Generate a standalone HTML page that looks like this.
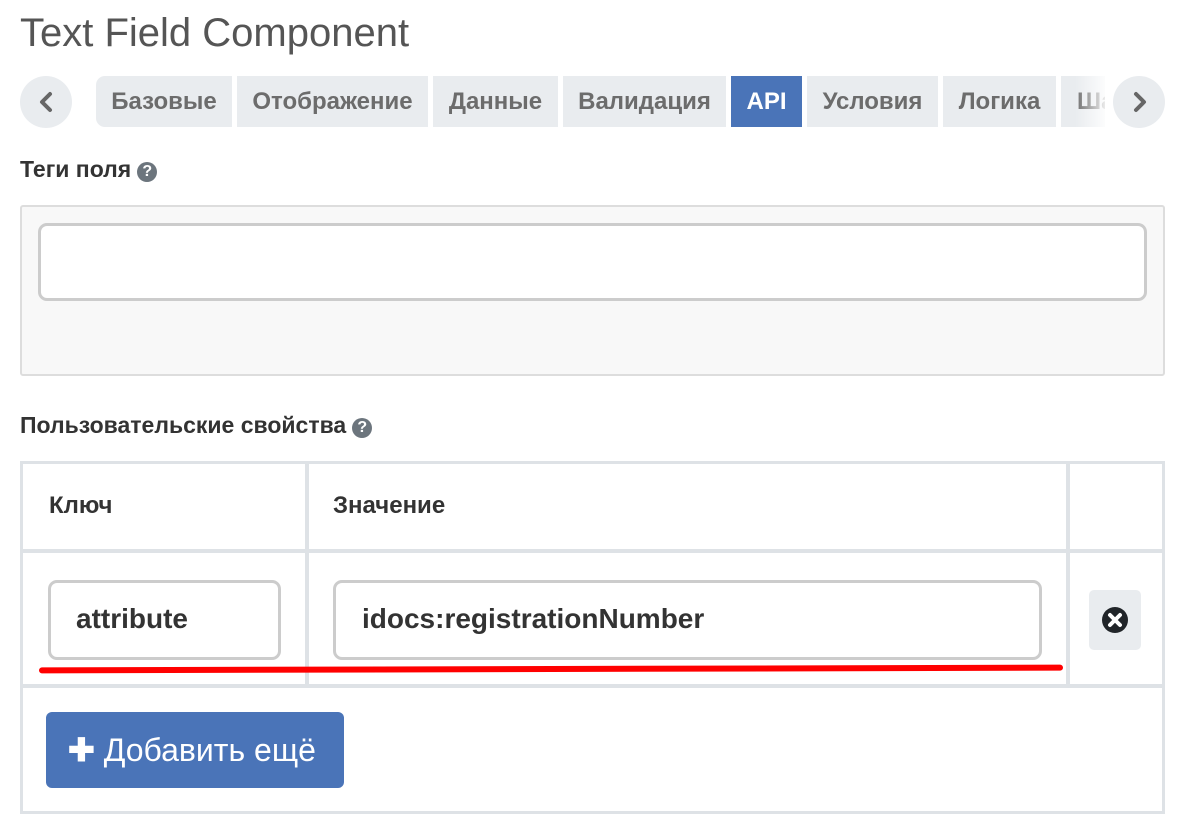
<!DOCTYPE html>
<html><head><meta charset="utf-8"><style>
*{box-sizing:border-box;margin:0;padding:0}
body{width:1195px;height:835px;background:#fff;font-family:"Liberation Sans",Arial,sans-serif;position:relative;overflow:hidden;color:#333}
.abs{position:absolute}
h1{position:absolute;left:20px;top:11px;font-size:40px;font-weight:normal;color:#555}
.circ{position:absolute;top:76px;width:52px;height:52px;border-radius:50%;background:#e9ecef}
.tab{position:absolute;top:76px;height:51px;background:#e9ecef;color:#6c6c6c;font-weight:bold;font-size:24px;line-height:51px;text-align:center;overflow:hidden;white-space:nowrap}
.lbl{position:absolute;left:20px;font-weight:bold;font-size:23px;color:#333}
.q{display:inline-block;width:20px;height:20px;border-radius:50%;background:#6c757d;color:#fff;font-size:16px;line-height:20px;text-align:center;vertical-align:1px;margin-left:6px}
.inp{position:absolute;border:3px solid #ccc;border-radius:9px;background:#fff;font-size:28px;font-weight:bold;color:#333;line-height:72px}
.hl{position:absolute;background:#dee2e6}
</style></head><body>
<h1>Text Field Component</h1>
<div class="circ" style="left:20px"><svg width="52" height="52"><path d="M30 18 L22 26 L30 34" stroke="#666" stroke-width="4" fill="none" stroke-linecap="round" stroke-linejoin="round"/></svg></div>
<div class="tab" style="left:96px;width:136px;border-radius:9px 0 0 9px">Базовые</div>
<div class="tab" style="left:237px;width:191px">Отображение</div>
<div class="tab" style="left:433px;width:125px">Данные</div>
<div class="tab" style="left:563px;width:163px">Валидация</div>
<div class="tab" style="left:731px;width:71px;background:#4a74b8;color:#fff">API</div>
<div class="tab" style="left:807px;width:131px">Условия</div>
<div class="tab" style="left:943px;width:113px">Логика</div>
<div class="tab" style="left:1061px;width:44px;text-align:left;padding-left:16px">Ша</div>
<div class="abs" style="left:1075px;top:76px;width:35px;height:51px;background:linear-gradient(to right,rgba(255,255,255,0),#fff)"></div>
<div class="circ" style="left:1113px"><svg width="52" height="52"><path d="M23 18 L31 26 L23 34" stroke="#666" stroke-width="4" fill="none" stroke-linecap="round" stroke-linejoin="round"/></svg></div>

<div class="lbl" style="top:156px">Теги поля<span class="q">?</span></div>
<div class="abs" style="left:20px;top:205px;width:1145px;height:171px;background:#f8f8f8;border:2px solid #ddd;border-radius:3px"></div>
<div class="inp" style="left:38px;top:223px;width:1109px;height:78px"></div>

<div class="lbl" style="top:412px">Пользовательские свойства<span class="q">?</span></div>
<div class="abs" style="left:20px;top:461px;width:1145px;height:353px;border:3px solid #dee2e6"></div>
<div class="hl" style="left:20px;top:549px;width:1145px;height:4px"></div>
<div class="hl" style="left:20px;top:684px;width:1145px;height:4px"></div>
<div class="hl" style="left:305px;top:461px;width:4px;height:225px"></div>
<div class="hl" style="left:1066px;top:461px;width:4px;height:225px"></div>
<div class="abs" style="left:49px;top:492px;font-weight:bold;font-size:24px">Ключ</div>
<div class="abs" style="left:333px;top:492px;font-weight:bold;font-size:24px">Значение</div>
<div class="inp" style="left:48px;top:580px;width:233px;height:80px;padding-left:25px">attribute</div>
<div class="inp" style="left:333px;top:580px;width:709px;height:80px;padding-left:26px">idocs:registrationNumber</div>
<div class="abs" style="left:39px;top:666px;width:1024px;height:6px;background:#f00;border-radius:3px;transform:rotate(-0.15deg)"></div>
<div class="abs" style="left:1089px;top:590px;width:52px;height:60px;background:#e9ecef;border-radius:5px"><svg width="52" height="60"><circle cx="26" cy="30" r="13" fill="#212529"/><path d="M21 25 L31 35 M31 25 L21 35" stroke="#fff" stroke-width="4" stroke-linecap="round"/></svg></div>
<div class="abs" style="left:46px;top:712px;width:298px;height:76px;background:#4a74b8;border-radius:6px;color:#fff;font-size:32px;line-height:76px;padding-left:22px"><span style="font-weight:bold">✚</span> Добавить ещё</div>
</body></html>
